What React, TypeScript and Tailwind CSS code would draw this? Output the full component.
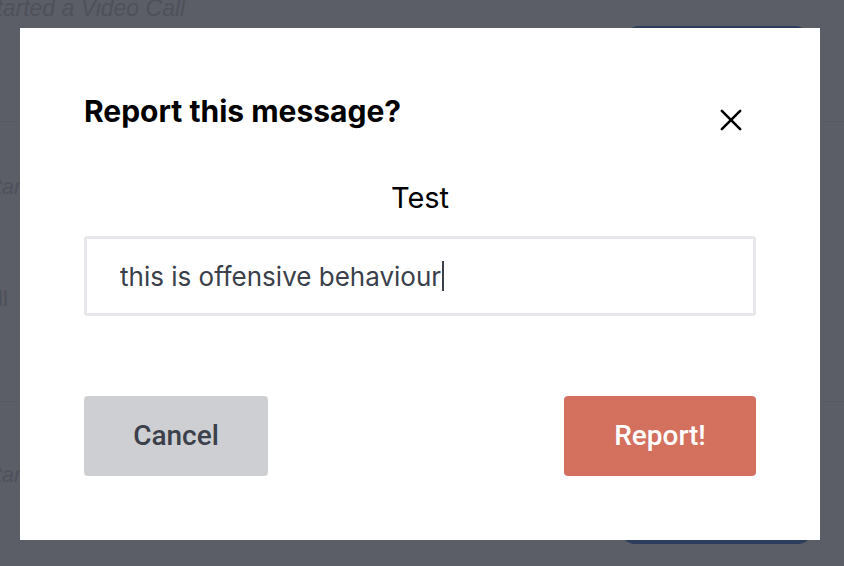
import React from "react";

const bgFont = { fontFamily: "'Liberation Sans', Arial, sans-serif" };
const btnFont = { fontFamily: "Roboto, 'Liberation Sans', Arial, sans-serif" };

export default function App() {
  return (
    <div className="relative w-[844px] h-[566px] overflow-hidden bg-[#5b5e67]" style={{ fontFamily: "Inter, 'Noto Sans', sans-serif" }}>
      {/* dimmed background content */}
      <div className="flex flex-col">
        <div className="-mt-[8px] h-[130px] border-b border-[#575a63] flex justify-between">
          <div className="-ml-[19px] text-[23px] italic leading-[32px] text-[#4e515a]" style={bgFont}>
            Started a Video Call
          </div>
          <div className="mt-[34px] mr-[36px] w-[182px] h-[60px] rounded-[12px] bg-[#2e3d5e]" />
        </div>
        <div className="pt-[48px] h-[110px]">
          <div className="-ml-[19px] text-[22px] italic text-[#4e515a]" style={bgFont}>Started</div>
        </div>
        <div className="pt-[50px] h-[170px] border-b border-[#575a63]">
          <div className="-ml-[30px] text-[22px] text-[#4e515a]" style={bgFont}>Call</div>
        </div>
        <div className="flex justify-between pt-[56px]">
          <div className="-ml-[19px] text-[22px] italic text-[#4e515a]" style={bgFont}>Started</div>
          <div className="mt-[6px] mr-[32px] w-[191px] h-[80px] rounded-[14px] bg-[#2e3d5e]" />
        </div>
      </div>
      {/* modal */}
      <div className="absolute left-[20px] top-[28px] w-[800px] h-[512px] bg-white px-[64px] pt-[64px] flex flex-col">
        <div className="flex justify-between items-start">
          <h2 className="text-[30px] font-bold text-black leading-[38px] tracking-[0px]">Report this message?</h2>
          <button className="mt-[16px] mr-[13px] w-[24px] h-[24px] flex items-center justify-center">
            <svg width="22" height="22" viewBox="0 0 24 24" fill="none" stroke="black" strokeWidth="2.8" strokeLinecap="round">
              <path d="M2 2L22 22M22 2L2 22" />
            </svg>
          </button>
        </div>
        <div className="mt-[48px] text-center text-[29px] leading-[36px] text-black">Test</div>
        <div className="mt-[20px] h-[80px] border-[3px] border-[#e5e7eb] rounded-[3px] flex items-center pl-[33px]">
          <span className="text-[26px] text-[#3a3f4b]">this is offensive behaviour</span>
          <span className="ml-[1px] w-[2px] h-[30px] bg-[#3a3f4b]" />
        </div>
        <div className="mt-[80px] flex justify-between">
          <button className="w-[184px] h-[80px] rounded-[4px] bg-[#cdcfd3] text-[28px] font-medium text-[#3b404a]" style={btnFont}>
            Cancel
          </button>
          <button className="w-[192px] h-[80px] rounded-[4px] bg-[#d4705e] text-[28px] font-medium text-white" style={btnFont}>
            Report!
          </button>
        </div>
      </div>
    </div>
  );
}
